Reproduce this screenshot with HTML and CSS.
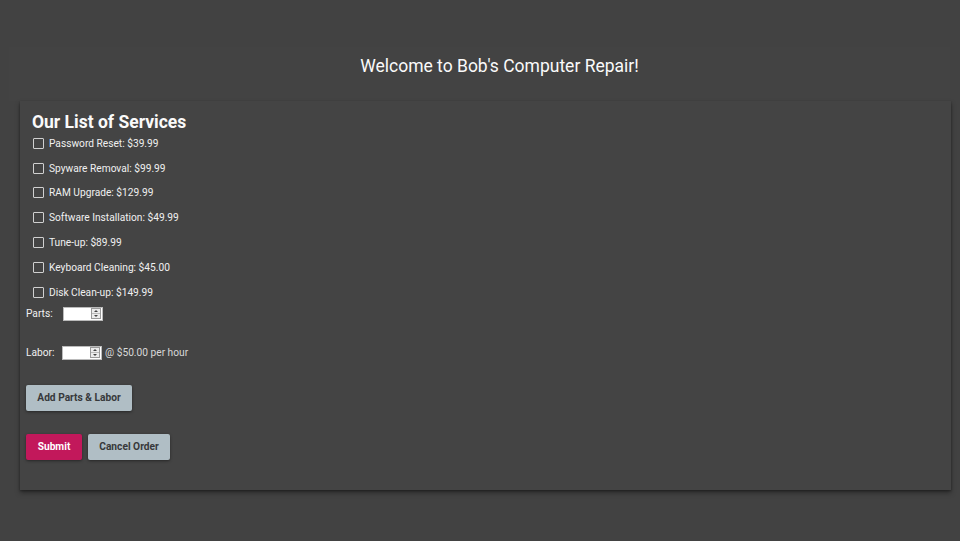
FILE: index.html
```html
<!DOCTYPE html>
<html>
<head>
<meta charset="utf-8">
<link rel="stylesheet" href="styles.css">
</head>
<body>
<header class="banner">
  <h1 class="banner-title">Welcome to Bob's Computer Repair!</h1>
</header>
<main class="card">
  <h2 class="card-title">Our List of Services</h2>
  <ul class="services">
    <li class="service"><span class="box"></span><span>Password Reset: $39.99</span></li>
    <li class="service"><span class="box"></span><span>Spyware Removal: $99.99</span></li>
    <li class="service"><span class="box"></span><span>RAM Upgrade: $129.99</span></li>
    <li class="service"><span class="box"></span><span>Software Installation: $49.99</span></li>
    <li class="service"><span class="box"></span><span>Tune-up: $89.99</span></li>
    <li class="service"><span class="box"></span><span>Keyboard Cleaning: $45.00</span></li>
    <li class="service"><span class="box"></span><span>Disk Clean-up: $149.99</span></li>
  </ul>
  <div class="field field-parts">
    <span class="field-label">Parts:</span>
    <span class="num"><svg class="spin" width="10" height="11" viewBox="0 0 10 11"><rect x="0.5" y="0.5" width="9" height="10" fill="#ececec" stroke="#9a9a9a"/><line x1="1" y1="5.5" x2="9" y2="5.5" stroke="#bbb"/><path d="M3 4 L5 2 L7 4 Z" fill="#444"/><path d="M3 7 L5 9 L7 7 Z" fill="#444"/></svg></span>
  </div>
  <div class="field field-labor">
    <span class="field-label">Labor:</span>
    <span class="num"><svg class="spin" width="10" height="11" viewBox="0 0 10 11"><rect x="0.5" y="0.5" width="9" height="10" fill="#ececec" stroke="#9a9a9a"/><line x1="1" y1="5.5" x2="9" y2="5.5" stroke="#bbb"/><path d="M3 4 L5 2 L7 4 Z" fill="#444"/><path d="M3 7 L5 9 L7 7 Z" fill="#444"/></svg></span>
    <span class="rate">@ $50.00 per hour</span>
  </div>
  <div class="actions actions-add">
    <button class="btn btn-grey">Add Parts &amp; Labor</button>
  </div>
  <div class="actions actions-submit">
    <button class="btn btn-pink">Submit</button>
    <button class="btn btn-grey">Cancel Order</button>
  </div>
</main>
</body>
</html>
```
FILE: styles.css
```css
html, body {
  margin: 0;
  padding: 0;
  background: #424242;
  font-family: Roboto, "Liberation Sans", sans-serif;
  color: #f2f2f2;
}
body {
  width: 960px;
  height: 541px;
  overflow: hidden;
  padding-top: 47px;
  box-sizing: border-box;
}
.banner {
  margin: 0 10px 0 9px;
  height: 54px;
  background: #434343;
  display: flex;
  align-items: flex-start;
  justify-content: center;
  padding: 8px 0 0 40px;
  box-sizing: border-box;
}
.banner-title {
  margin: 0;
  font-size: 17.5px;
  font-weight: 400;
  line-height: 22px;
  color: #fafafa;
}
.card {
  margin: 0 9px 0 20px;
  height: 389px;
  background: #444;
  box-shadow: 0 3px 5px rgba(0,0,0,0.35), 0 1px 2px rgba(0,0,0,0.3);
  padding: 11px 0 0 6px;
  box-sizing: border-box;
}
.card-title {
  margin: 0 0 0 6px;
  font-size: 17.5px;
  font-weight: 700;
  color: #fafafa;
  line-height: 20px;
}
.services {
  list-style: none;
  margin: -1px 0 0;
  padding: 0 0 0 7px;
}
.service {
  display: flex;
  align-items: center;
  height: 24.8px;
  font-size: 10.2px;
  color: #f0f0f0;
}
.box {
  width: 9px;
  height: 9px;
  border: 1.5px solid #d0d0d0;
  border-radius: 1px;
  margin-right: 5px;
  flex: none;
}
.field {
  display: flex;
  align-items: center;
  font-size: 10.2px;
  color: #f0f0f0;
}
.field-parts { margin-top: 1px; height: 16px; }
.field-labor { margin-top: 23px; height: 16px; }
.field-label { width: 37px; }
.field-labor .field-label { width: 36px; }
.num {
  width: 40px;
  height: 14px;
  background: #fff;
  border: 1px solid #bbb;
  box-sizing: border-box;
  display: flex;
  justify-content: flex-end;
  align-items: center;
  padding-right: 1px;
}
.spin { display: block; }
.rate {
  margin-left: 3px;
  color: #d8d8d8;
}
.actions {
  display: flex;
  gap: 6px;
}
.actions-add { margin-top: 24px; }
.actions-submit { margin-top: 23px; }
.btn {
  font-family: Roboto, "Liberation Sans", sans-serif;
  font-size: 10.2px;
  font-weight: 700;
  border: none;
  border-radius: 2px;
  padding: 0;
  height: 26px;
  box-shadow: 0 1px 3px rgba(0,0,0,0.45);
  cursor: pointer;
}
.btn-grey {
  background: #b0bec5;
  color: #37393b;
}
.btn-pink {
  background: #c2185b;
  color: #fff;
}
.actions-add .btn { width: 106px; }
.actions-submit .btn-pink { width: 56px; }
.actions-submit .btn-grey { width: 82px; }
```
